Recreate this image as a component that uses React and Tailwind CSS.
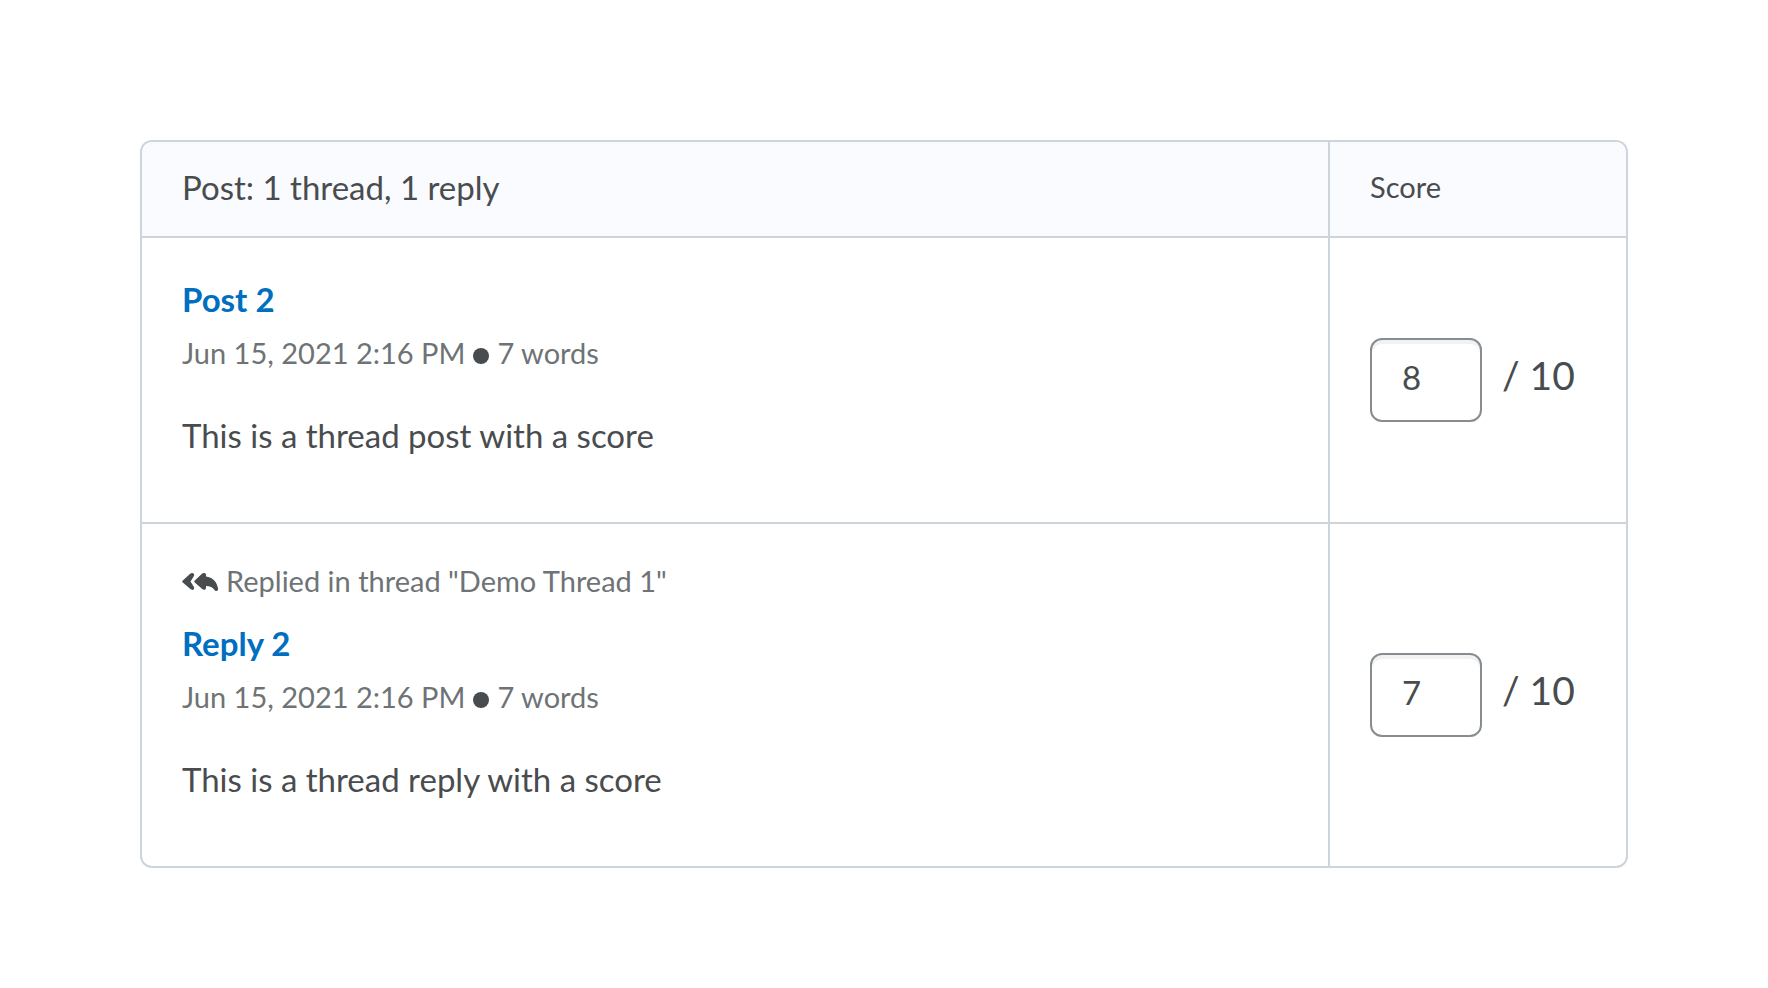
function ReplyAllIcon() {
  return (
    <svg className="mt-0.5 h-5 w-9 shrink-0" viewBox="0 0 36 20" fill="#494c4e" aria-hidden="true">
      <path d="M8.400 1.600C9.700.6 11.300.8 11.900 1.900C12.400 2.900 12.200 3.700 11.500 4.700L8.500 9.500L11.500 14.200C12.200 15.200 12.400 16 11.900 17C11.200 18.200 9.700 18.100 8.400 17.100L.8 10.600C.1 10 .1 9 .8 8.400Z" />
      <path d="M20.200 1.500C21.600.4 24 .9 24 2.600V4.400C30.500 5.100 34.800 9.600 36 16.200C36.300 17.600 35.800 18.600 34.800 18.900C33.800 19.100 33 18.500 32.300 17.700C30.400 15.100 28 14 24 13.900V15.900C24 17.800 21.800 18.300 20.200 17L12.800 10.600C12.100 10 12.100 9 12.800 8.400Z" />
    </svg>
  );
}

const entries = [
  {
    id: "post-2",
    title: "Post 2",
    date: "Jun 15, 2021 2:16 PM",
    words: "7 words",
    body: "This is a thread post with a score",
    score: "8",
  },
  {
    id: "reply-2",
    context: 'Replied in thread "Demo Thread 1"',
    title: "Reply 2",
    date: "Jun 15, 2021 2:16 PM",
    words: "7 words",
    body: "This is a thread reply with a score",
    score: "7",
  },
];

function EntryRow({ entry }) {
  return (
    <tr>
      <td className="border-t-2 border-[#cdd5dc] px-10 pt-9 pb-[62px] align-top">
        {entry.context && (
          <p className="mb-4 flex items-center gap-2 text-[29px] leading-[42px] text-[#6e7376]">
            <ReplyAllIcon />
            {entry.context}
          </p>
        )}
        <h2 className="text-[33px] leading-[50px] font-bold">
          <a id={entry.id} href={"#" + entry.id} className="text-[#006fbf] hover:underline">
            {entry.title}
          </a>
        </h2>
        <p className="mt-2 flex items-center gap-2 text-[29px] leading-[42px] text-[#6e7376]">
          <span>{entry.date}</span>
          <span className="mt-1.5 size-4 rounded-full bg-[#494c4e]" />
          <span>{entry.words}</span>
        </p>
        <p className="mt-9 text-[33px] leading-[50px]">{entry.body}</p>
      </td>
      <td className="border-t-2 border-l-2 border-[#cdd5dc] px-10 align-middle">
        <div className="flex items-baseline gap-5">
          <input
            type="text"
            inputMode="numeric"
            aria-labelledby={"score-heading " + entry.id}
            defaultValue={entry.score}
            className="h-[84px] w-28 rounded-xl border-2 border-[#868c8f] bg-white pr-4 pb-1.5 pl-[30px] text-[33px] shadow-[inset_0_4px_0_0_#f1f2f4] outline-none focus:border-[#006fbf]"
          />
          <span className="text-[39px] leading-[48px] whitespace-nowrap">/ 10</span>
        </div>
      </td>
    </tr>
  );
}

export default function App() {
  return (
    <main className="min-h-screen bg-white p-[140px] pb-[120px] font-['Lato',sans-serif] text-[#494c4e]">
      <div className="overflow-hidden rounded-xl border-2 border-[#cdd5dc]">
        <table className="w-full border-separate border-spacing-0 text-left">
          <thead className="bg-[#f9fbff]">
            <tr>
              <th scope="col" className="px-10 pt-5 pb-6 text-[33px] leading-[50px] font-normal">
                Post: 1 thread, 1 reply
              </th>
              <th
                scope="col"
                id="score-heading"
                className="w-[298px] border-l-2 border-[#cdd5dc] px-10 pb-1 text-[29px] font-normal"
              >
                Score
              </th>
            </tr>
          </thead>
          <tbody>
            {entries.map((entry) => (
              <EntryRow key={entry.id} entry={entry} />
            ))}
          </tbody>
        </table>
      </div>
    </main>
  );
}
